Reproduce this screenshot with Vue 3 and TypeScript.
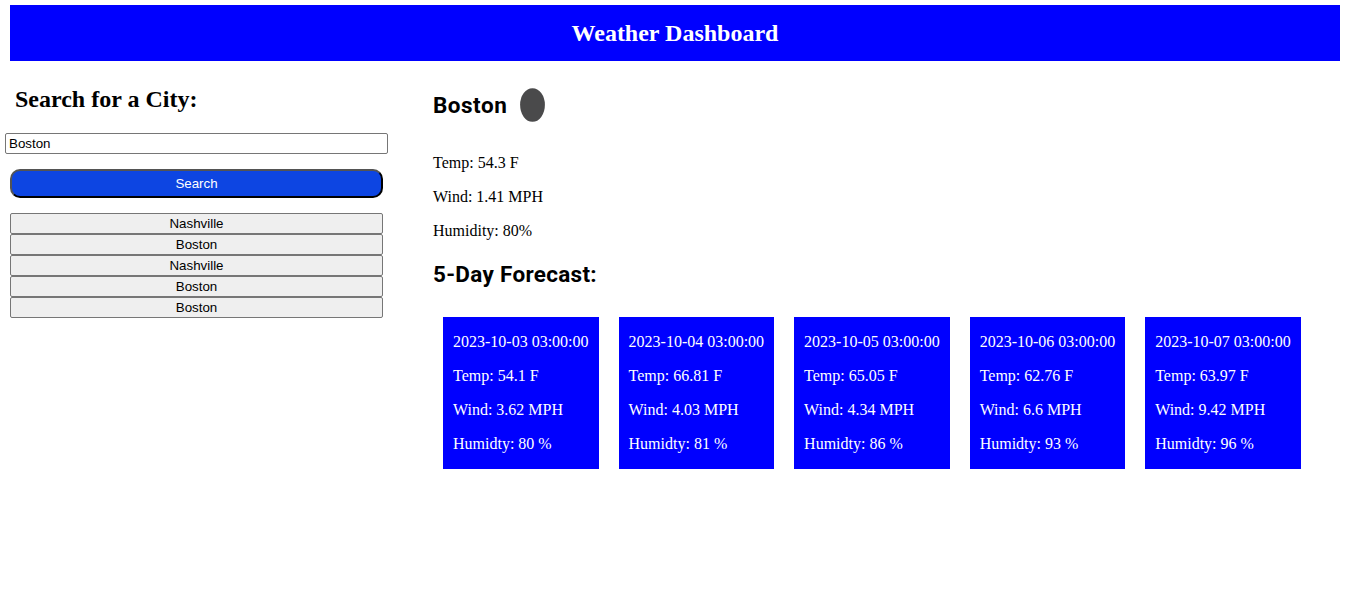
<script setup lang="ts">
import { ref } from 'vue'

interface Forecast {
  date: string
  temp: number
  wind: number
  humidity: number
}

const city = ref('Boston')
const history: string[] = ['Nashville', 'Boston', 'Nashville', 'Boston', 'Boston']
const forecasts: Forecast[] = [
  { date: '2023-10-03 03:00:00', temp: 54.1, wind: 3.62, humidity: 80 },
  { date: '2023-10-04 03:00:00', temp: 66.81, wind: 4.03, humidity: 81 },
  { date: '2023-10-05 03:00:00', temp: 65.05, wind: 4.34, humidity: 86 },
  { date: '2023-10-06 03:00:00', temp: 62.76, wind: 6.6, humidity: 93 },
  { date: '2023-10-07 03:00:00', temp: 63.97, wind: 9.42, humidity: 96 },
]
</script>

<template>
  <div class="page">
    <header class="header"><h1>Weather Dashboard</h1></header>
    <main class="layout">
      <aside class="sidebar">
        <h2>Search for a City:</h2>
        <input v-model="city" class="field" type="text" aria-label="City" />
        <button class="search" type="button">Search</button>
        <div class="history">
          <button v-for="(name, i) in history" :key="i" type="button">{{ name }}</button>
        </div>
      </aside>
      <section class="weather">
        <div class="current">
          <h2 class="city">Boston</h2>
          <svg class="icon" width="25" height="34" viewBox="0 0 25 34" aria-hidden="true">
            <ellipse cx="12.5" cy="17" rx="12.4" ry="16.8" fill="#4a4a4b" />
          </svg>
        </div>
        <p>Temp: 54.3 F</p>
        <p>Wind: 1.41 MPH</p>
        <p>Humidity: 80%</p>
        <h2 class="forecast-title">5-Day Forecast:</h2>
        <div class="cards">
          <article v-for="day in forecasts" :key="day.date" class="card">
            <p>{{ day.date }}</p>
            <p>Temp: {{ day.temp }} F</p>
            <p>Wind: {{ day.wind }} MPH</p>
            <p>Humidty: {{ day.humidity }} %</p>
          </article>
        </div>
      </section>
    </main>
  </div>
</template>

<style>
body {
  margin: 0;
  background: #fff;
}
</style>

<style scoped>
.page {
  box-sizing: border-box;
  width: 1355px;
  height: 596px;
  padding: 5px 15px 0 10px;
  overflow: hidden;
  color: #000;
  font: 16px/18px "Liberation Serif", "Times New Roman", serif;
}
h1,
h2,
p {
  margin: 0;
}
.header {
  height: 56px;
  background: #00f;
  color: #fff;
  text-align: center;
}
.header h1 {
  font-size: 24px;
  line-height: 56px;
}
.layout {
  display: flex;
}
.sidebar {
  display: flex;
  flex-direction: column;
  width: 373px;
  padding-top: 25px;
}
.sidebar h2 {
  padding-left: 5px;
  font-size: 24px;
  line-height: 27px;
}
.field {
  box-sizing: border-box;
  width: 383px;
  height: 21px;
  margin: 20px 0 0 -5px;
  padding: 1px 3px;
  border: 1px solid #767676;
  border-radius: 2px;
  background: #fff;
  color: #000;
  font: 13.333px "Liberation Sans", Arial, sans-serif;
  outline: none;
}
.search {
  height: 29px;
  margin-top: 15px;
  padding: 0;
  border: 2px outset #000;
  border-radius: 10px;
  background: #0d45e2;
  color: #fff;
  font: 13.333px "Liberation Sans", Arial, sans-serif;
}
.history {
  display: flex;
  flex-direction: column;
  margin-top: 15px;
}
.history button {
  height: 21px;
  padding: 0;
  border: 1px solid #767676;
  border-radius: 2px;
  background: #efefef;
  color: #000;
  font: 13.333px "Liberation Sans", Arial, sans-serif;
}
.weather {
  padding: 27px 0 0 50px;
}
.current {
  display: flex;
  align-items: center;
  height: 34px;
  margin-bottom: 32px;
}
.city,
.forecast-title {
  font-family: Roboto, "Liberation Sans", sans-serif;
  font-size: 22.5px;
  font-weight: 700;
  line-height: 28px;
}
.city {
  width: 87px;
  letter-spacing: 0.5px;
}
.weather p + p {
  margin-top: 16px;
}
.forecast-title {
  margin-top: 20px;
  letter-spacing: 0.3px;
}
.cards {
  display: flex;
  gap: 20px;
  margin: 29px 0 0 10px;
}
.card {
  box-sizing: border-box;
  height: 152px;
  padding: 16px 10px;
  background: #00f;
  color: #fff;
  white-space: nowrap;
}
</style>
